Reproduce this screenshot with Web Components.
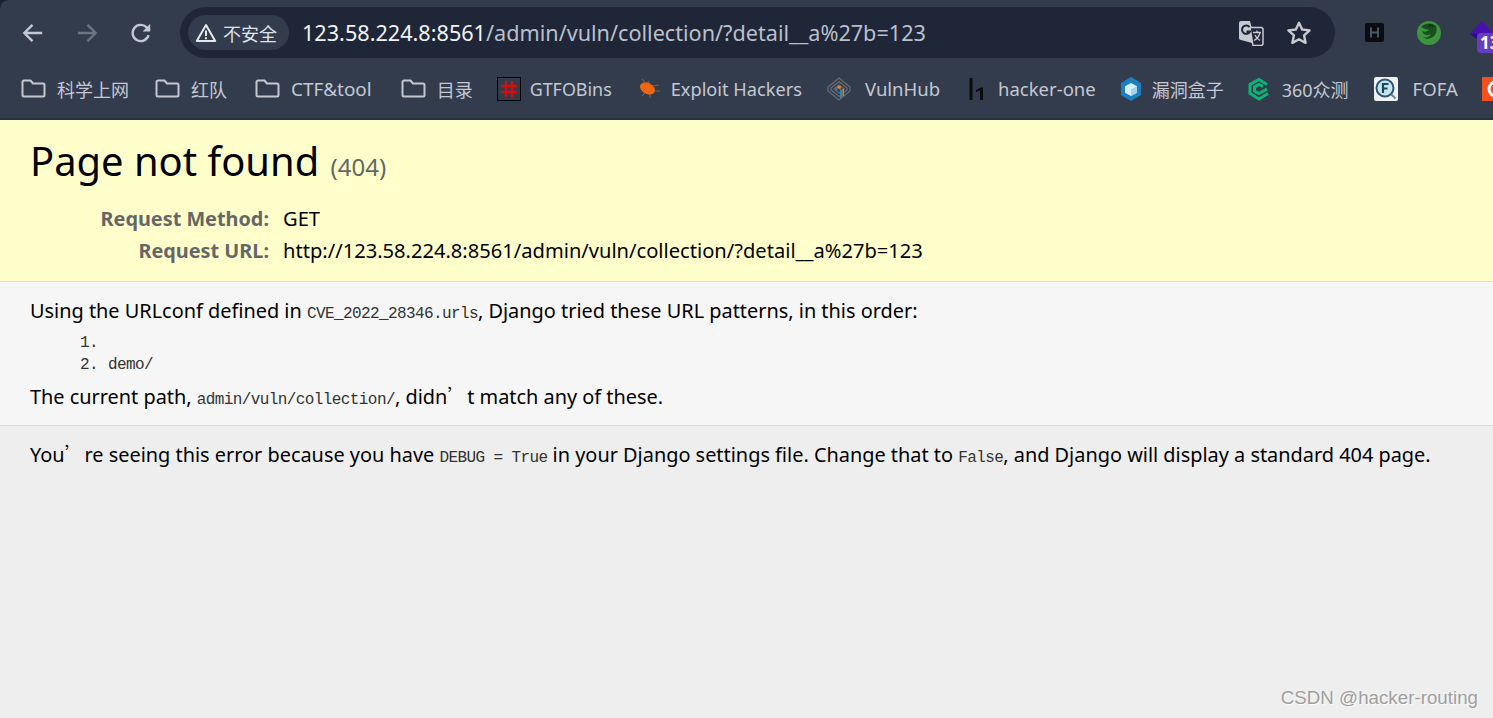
<!DOCTYPE html>
<html lang="en">
<head>
<meta charset="utf-8">
<title>Page not found</title>
<style>
  html, body { margin: 0; height: 100%; overflow: hidden; background: #eee; }
  body { display: flex; flex-direction: column; font-family: "Noto Sans", "Noto Sans CJK SC", sans-serif; }
  .q { font-family: "Noto Sans CJK SC", sans-serif; font-weight: 300; }
  code { font-family: "Liberation Mono", monospace; font-size: 16px; letter-spacing: -0.6px; color: #333; }
</style>
</head>
<body>
<browser-toolbar url-host="123.58.224.8:8561" url-rest="/admin/vuln/collection/?detail__a%27b=123"></browser-toolbar>
<bookmark-bar>
  <bookmark-item icon="folder" gap="11" after="26" size="18">科学上网</bookmark-item>
  <bookmark-item icon="folder" gap="11" after="28" size="18">红队</bookmark-item>
  <bookmark-item icon="folder" gap="11" after="29" size="18.900">CTF&amp;tool</bookmark-item>
  <bookmark-item icon="folder" gap="11" after="24" size="18">目录</bookmark-item>
  <bookmark-item icon="gtfo" gap="9" after="25" size="17.900">GTFOBins</bookmark-item>
  <bookmark-item icon="bug" gap="10" after="25" size="18.200">Exploit Hackers</bookmark-item>
  <bookmark-item icon="vulnhub" gap="14" after="25">VulnHub</bookmark-item>
  <bookmark-item icon="h1" gap="9" after="23">hacker-one</bookmark-item>
  <bookmark-item icon="box" gap="9" after="23" size="18">漏洞盒子</bookmark-item>
  <bookmark-item icon="e360" gap="11" after="25" size="18">360众测</bookmark-item>
  <bookmark-item icon="fofa" gap="15" after="24">FOFA</bookmark-item>
  <bookmark-item icon="orange" gap="0" after="0"></bookmark-item>
</bookmark-bar>
<error-summary>
  <span slot="title">Page not found</span>
  <span slot="code">(404)</span>
  <request-row label="Request Method:">GET</request-row>
  <request-row label="Request URL:">http://123.58.224.8:8561/admin/vuln/collection/?detail__a%27b=123</request-row>
</error-summary>
<error-info>
  <p>Using the URLconf defined in <code>CVE_2022_28346.urls</code>, Django tried these URL patterns, in this order:</p>
  <pattern-list>
    <pattern-item num="1."></pattern-item>
    <pattern-item num="2.">demo/</pattern-item>
  </pattern-list>
  <p>The current path, <code>admin/vuln/collection/</code>, didn<span class="q">’</span>t match any of these.</p>
</error-info>
<error-explanation>
  <p>You<span class="q">’</span>re seeing this error because you have <code>DEBUG = True</code> in your Django settings file. Change that to <code>False</code>, and Django will display a standard 404 page.</p>
</error-explanation>
<water-mark>CSDN @hacker-routing</water-mark>

<script>
const ICONS = {
  folder: `<svg width="25" height="20" viewBox="0 0 25 20" fill="none" stroke="#c4c7cf" stroke-width="2" stroke-linejoin="round"><path d="M1.500 3a1.500 1.500 0 0 1 1.500-1.500h6.500l2.500 3h10a1.500 1.500 0 0 1 1.500 1.500v10a1.500 1.500 0 0 1-1.500 1.500h-19a1.500 1.500 0 0 1-1.500-1.500z"/></svg>`,
  gtfo: `<svg width="24" height="24" viewBox="0 0 24 24"><rect x=".5" y=".5" width="23" height="23" fill="#333c4d" stroke="#000"/><path d="M9 4v16M15 4v16M4 9h16M4 15h16" stroke="#d01010" stroke-width="2.400"/></svg>`,
  bug: `<svg width="24" height="24" viewBox="0 0 24 24"><ellipse cx="10.500" cy="11.500" rx="8" ry="5.500" fill="#f0650f" transform="rotate(28 10.500 11.500)"/><path d="M5 2l4 5M11 4l2 3M22 8l-6 1M23 14l-6 0M5 19l3-3M13 21l0-4" stroke="#9a5a30" stroke-width="1"/></svg>`,
  vulnhub: `<svg width="24" height="24" viewBox="0 0 24 24" fill="none" stroke="#666b74" stroke-width="1.300"><path d="M12 1l11 9v4l-11 9-11-9v-4z"/><path d="M12 4.500l8 6.500v2l-8 6.500-8-6.500v-2z"/><path d="M12 8l5 4-5 4-5-4z"/><path d="M11 8.500l3 .5-.5 3.500-3.500-1.500z" fill="#e8821e" stroke="none"/><path d="M8.500 9.500l2.500 2.500-1 1.500-2.500-2z" fill="#2e7fb5" stroke="none"/><path d="M13 12.500h2v8.500h-2z" fill="#2e86c1" stroke="none"/><path d="M15.500 12h1.500v7h-1.500z" fill="#c98a2a" stroke="none"/></svg>`,
  h1: `<svg width="24" height="24" viewBox="0 0 24 24"><path d="M4.500 1h3v22h-3z" fill="#0c0c0c"/><path d="M11 13l5-2.500h2V23h-3V13.500l-4 1.500z" fill="#0c0c0c"/></svg>`,
  box: `<svg width="24" height="24" viewBox="0 0 24 24"><path d="M12 0l10 6v12l-10 6-10-6V6z" fill="#1c7fc0"/><path d="M12 6l6 3.300v6.400l-6 3.300-6-3.300V9.300z" fill="#d6eefa"/><path d="M12 12.500l6-3.200v6.400l-6 3.300z" fill="#9fd3ee"/></svg>`,
  e360: `<svg width="24" height="24" viewBox="0 0 24 24" fill="none" stroke="#0bb574" stroke-width="3"><path d="M20 7.500L12 2.500 3 7.500v9l9 5.500 9-5.500"/><path d="M16 9.500l-4-2-4.500 2.500v4l4.500 2.500 8-4.500"/></svg>`,
  fofa: `<svg width="24" height="24" viewBox="0 0 24 24"><rect width="24" height="24" rx="2" fill="#eef1f2"/><circle cx="11" cy="11" r="8.500" fill="#c6e4ec" stroke="#2d5672" stroke-width="2"/><path d="M9 16V7h5.500M9 11.500h4.500" fill="none" stroke="#1d4461" stroke-width="2.200"/><path d="M17.500 17.500l4 4" stroke="#6f8494" stroke-width="2"/></svg>`,
  orange: `<svg width="24" height="24" viewBox="0 0 24 24"><rect width="24" height="24" fill="#f4511e"/><circle cx="14" cy="12" r="7" fill="none" stroke="#fff" stroke-width="3"/></svg>`
};

// shadow root helper, every element here is only markup and style
class BaseElement extends HTMLElement {
  constructor() {
    super();
    this.attachShadow({ mode: "open" }).innerHTML = this.render();
  }
  render() {
    return "<slot></slot>";
  }
}

class BrowserToolbar extends BaseElement {
  render() {
    const host = this.getAttribute("url-host");
    const rest = this.getAttribute("url-rest");
    return `
      <style>
        :host { display: flex; align-items: center; flex: none; height: 65px; background: #333c4d; position: relative; box-sizing: border-box; font-family: "Noto Sans", "Noto Sans CJK SC", sans-serif; }
        .nav { display: flex; width: 180px; flex: none; height: 52px; align-items: center; }
        .nav svg { flex: none; }
        .nav svg + svg { margin-left: 28px; }
        .nav svg:first-child { margin-left: 20px; }
        .omni { flex: none; width: 1155px; height: 51px; border-radius: 26px; background: #1e2638; display: flex; align-items: center; box-sizing: border-box; padding-left: 8px; }
        .chip { height: 35px; width: 101px; flex: none; border-radius: 18px; background: #333c4d; display: flex; align-items: center; color: #dfe2e8; font-size: 18px; box-sizing: border-box; padding-left: 7px; gap: 6px; }
        .url { margin-left: 13px; font-size: 21.630px; color: #b9c0cc; white-space: nowrap; flex: 1; }
        .url b { font-weight: 400; color: #f1f3f6; }
        .acts { display: flex; align-items: center; gap: 22px; padding-right: 23px; }
        .exts { display: flex; align-items: center; padding-left: 30px; flex: 1; height: 65px; }
        .exts svg { flex: none; }
        .corner { position: absolute; left: 0; top: 0; width: 8px; height: 8px; background: radial-gradient(circle at 100% 100%, transparent 7px, #1c2230 8px); }
        .roof { position: absolute; left: 1470px; top: 21px; }
        .badge { position: absolute; left: 1477px; top: 33px; width: 30px; height: 20px; border-radius: 4px; background: #6a3cc0; color: #fff; font: 700 17px "Noto Sans", sans-serif; line-height: 20px; padding-left: 3px; box-sizing: border-box; }
      </style>
      <div class="corner"></div>
      <div class="nav">
        <svg width="26" height="26" viewBox="0 0 24 24" fill="none" stroke="#c3c8d2" stroke-width="2.200"><path d="M20.500 12H4M11.500 4.500L4 12l7.500 7.500"/></svg>
        <svg width="26" height="26" viewBox="0 0 24 24" fill="none" stroke="#6d7482" stroke-width="2.200"><path d="M3.500 12H20M12.500 4.500L20 12l-7.500 7.500"/></svg>
        <svg width="26" height="26" viewBox="0 0 24 24" fill="none" stroke="#c3c8d2" stroke-width="2.200"><path d="M19 14a7.500 7.500 0 1 1-1.800-7.200L20 9.500"/><path d="M20.500 3.500v7h-7" fill="#c3c8d2" stroke="none"/></svg>
      </div>
      <div class="omni">
        <div class="chip">
          <svg width="22" height="20" viewBox="0 0 22 20" fill="none" stroke="#e6e8ec" stroke-width="2"><path d="M11 2L1.800 18h18.400z" stroke-linejoin="round"/><path d="M11 7.500v5.500M11 14.200v2"/></svg>
          <span>不安全</span>
        </div>
        <div class="url"><b>${host}</b>${rest}</div>
        <div class="acts">
          <svg width="26" height="26" viewBox="0 0 26 26"><path d="M1 3a2 2 0 0 1 2-2h9l6 23-15-4a2 2 0 0 1-2-2z" fill="#c7cad1"/><path d="M12 7.500h11a2 2 0 0 1 2 2v14a2 2 0 0 1-2 2h-8z" fill="#1e2638" stroke="#c7cad1" stroke-width="1.500"/><path d="M15 12.500h8M19 10.500v2M22 12.500c-1 4-3 6.500-6 8M17 15c1 2.500 2.500 4 5 5.500" stroke="#c7cad1" stroke-width="1.300" fill="none"/><path d="M11.500 7a4.200 4.200 0 1 0 .5 4.500h-3.500" stroke="#1e2638" stroke-width="2" fill="none"/></svg>
          <svg width="26" height="26" viewBox="0 0 24 24" fill="none" stroke="#c7cad1" stroke-width="2.200" stroke-linejoin="round"><path d="M12 2.500l2.900 6.300 6.900.8-5.100 4.700 1.400 6.800-6.100-3.400-6.100 3.400 1.400-6.800-5.100-4.700 6.900-.8z"/></svg>
        </div>
      </div>
      <div class="exts">
        <svg width="19" height="19" viewBox="0 0 19 19"><rect width="19" height="19" rx="2" fill="#0a0c10"/><path d="M6 4.500v10M13 4.500v10M6 9.500h7" stroke="#4a5568" stroke-width="2"/></svg>
        <svg width="24" height="24" viewBox="0 0 24 24" style="margin-left:33px"><circle cx="12" cy="12" r="12" fill="#3f9440"/><path d="M4 6c3-4 11-5 15-1 1 2 1 6-1 9-3 4-9 5-12 2 3 1 7 0 8-3-3 2-8 1-9-3 2 1 5 1 7-1-2-1-5-1-8-3z" fill="#184f1c"/><path d="M12 3c2 0 4 1 5 3-2-1-4-1-6 0z" fill="#0b2d10"/></svg>
      </div>
      <svg class="roof" width="24" height="20" viewBox="0 0 24 20"><path d="M0 13L12 0l12 13-12 7z" fill="#4a10b0"/><path d="M0 13l7-1v6z" fill="#2a0e86"/></svg>
      <div class="badge">13</div>
    `;
  }
}

class BookmarkBar extends BaseElement {
  render() {
    return `
      <style>
        :host { display: flex; align-items: center; flex: none; height: 55px; padding: 0 0 6px 21px; background: #333c4d; border-bottom: 2px solid #2a3040; box-sizing: border-box; overflow: hidden; white-space: nowrap; font-family: "Noto Sans", "Noto Sans CJK SC", sans-serif; }
      </style>
      <slot></slot>
    `;
  }
}

class BookmarkItem extends BaseElement {
  render() {
    const icon = ICONS[this.getAttribute("icon")];
    const size = this.getAttribute("size") || "18.500";
    return `
      <style>
        :host { display: inline-flex; align-items: center; flex: none; gap: ${this.getAttribute("gap")}px; margin-right: ${this.getAttribute("after")}px; color: #c3c8d2; font-size: ${size}px; }
        svg { display: block; flex: none; }
      </style>
      ${icon}<slot></slot>
    `;
  }
}

class ErrorSummary extends BaseElement {
  render() {
    return `
      <style>
        :host { display: block; flex: none; height: 162px; box-sizing: border-box; background: #ffc; border-bottom: 1px solid #ddd; padding: 14px 30px 0; color: #000; }
        h1 { margin: 0 0 9px; font-weight: 400; font-size: 39.900px; line-height: 54px; white-space: nowrap; }
        .code { color: #666; font-size: 24px; margin-left: 1px; }
      </style>
      <h1><slot name="title"></slot> <span class="code"><slot name="code"></slot></span></h1>
      <slot></slot>
    `;
  }
}

class RequestRow extends BaseElement {
  render() {
    return `
      <style>
        :host { display: grid; grid-template-columns: 210px 1fr; column-gap: 14px; margin-left: 29px; height: 32px; line-height: 31px; font-size: 20.130px; white-space: nowrap; }
        .label { color: #666; font-weight: 700; text-align: right; font-size: 19.850px; }
      </style>
      <span class="label">${this.getAttribute("label")}</span><span><slot></slot></span>
    `;
  }
}

class ErrorInfo extends BaseElement {
  render() {
    return `
      <style>
        :host { display: block; flex: none; height: 144px; box-sizing: border-box; background: #f6f6f6; border-bottom: 1px solid #ddd; padding: 14px 30px 0; font-size: 19.900px; color: #000; }
        ::slotted(p) { margin: 0; line-height: 30px; white-space: nowrap; }
      </style>
      <slot></slot>
    `;
  }
}

class PatternList extends BaseElement {
  render() {
    return `
      <style>
        :host { display: block; padding: 3px 0 5px 50px; color: #333; font-family: "Liberation Mono", monospace; font-size: 16px; letter-spacing: -0.6px; }
      </style>
      <slot></slot>
    `;
  }
}

class PatternItem extends BaseElement {
  render() {
    return `
      <style>
        :host { display: flex; height: 22px; line-height: 22px; }
        .n { width: 28px; flex: none; }
      </style>
      <span class="n">${this.getAttribute("num")}</span><slot></slot>
    `;
  }
}

class ErrorExplanation extends BaseElement {
  render() {
    return `
      <style>
        :host { display: block; flex: 1; background: #eee; padding: 13px 30px 0; font-size: 19.900px; color: #000; }
        ::slotted(p) { margin: 0; line-height: 30px; white-space: nowrap; }
      </style>
      <slot></slot>
    `;
  }
}

class WaterMark extends BaseElement {
  render() {
    return `
      <style>
        :host { position: absolute; right: 15px; bottom: 9px; color: #a0a0a0; font: 18.760px "Liberation Sans", sans-serif; text-shadow: 1px 1px 0 #fafafa; }
      </style>
      <slot></slot>
    `;
  }
}

customElements.define("browser-toolbar", BrowserToolbar);
customElements.define("bookmark-bar", BookmarkBar);
customElements.define("bookmark-item", BookmarkItem);
customElements.define("error-summary", ErrorSummary);
customElements.define("request-row", RequestRow);
customElements.define("error-info", ErrorInfo);
customElements.define("pattern-list", PatternList);
customElements.define("pattern-item", PatternItem);
customElements.define("error-explanation", ErrorExplanation);
customElements.define("water-mark", WaterMark);
</script>
</body>
</html>
